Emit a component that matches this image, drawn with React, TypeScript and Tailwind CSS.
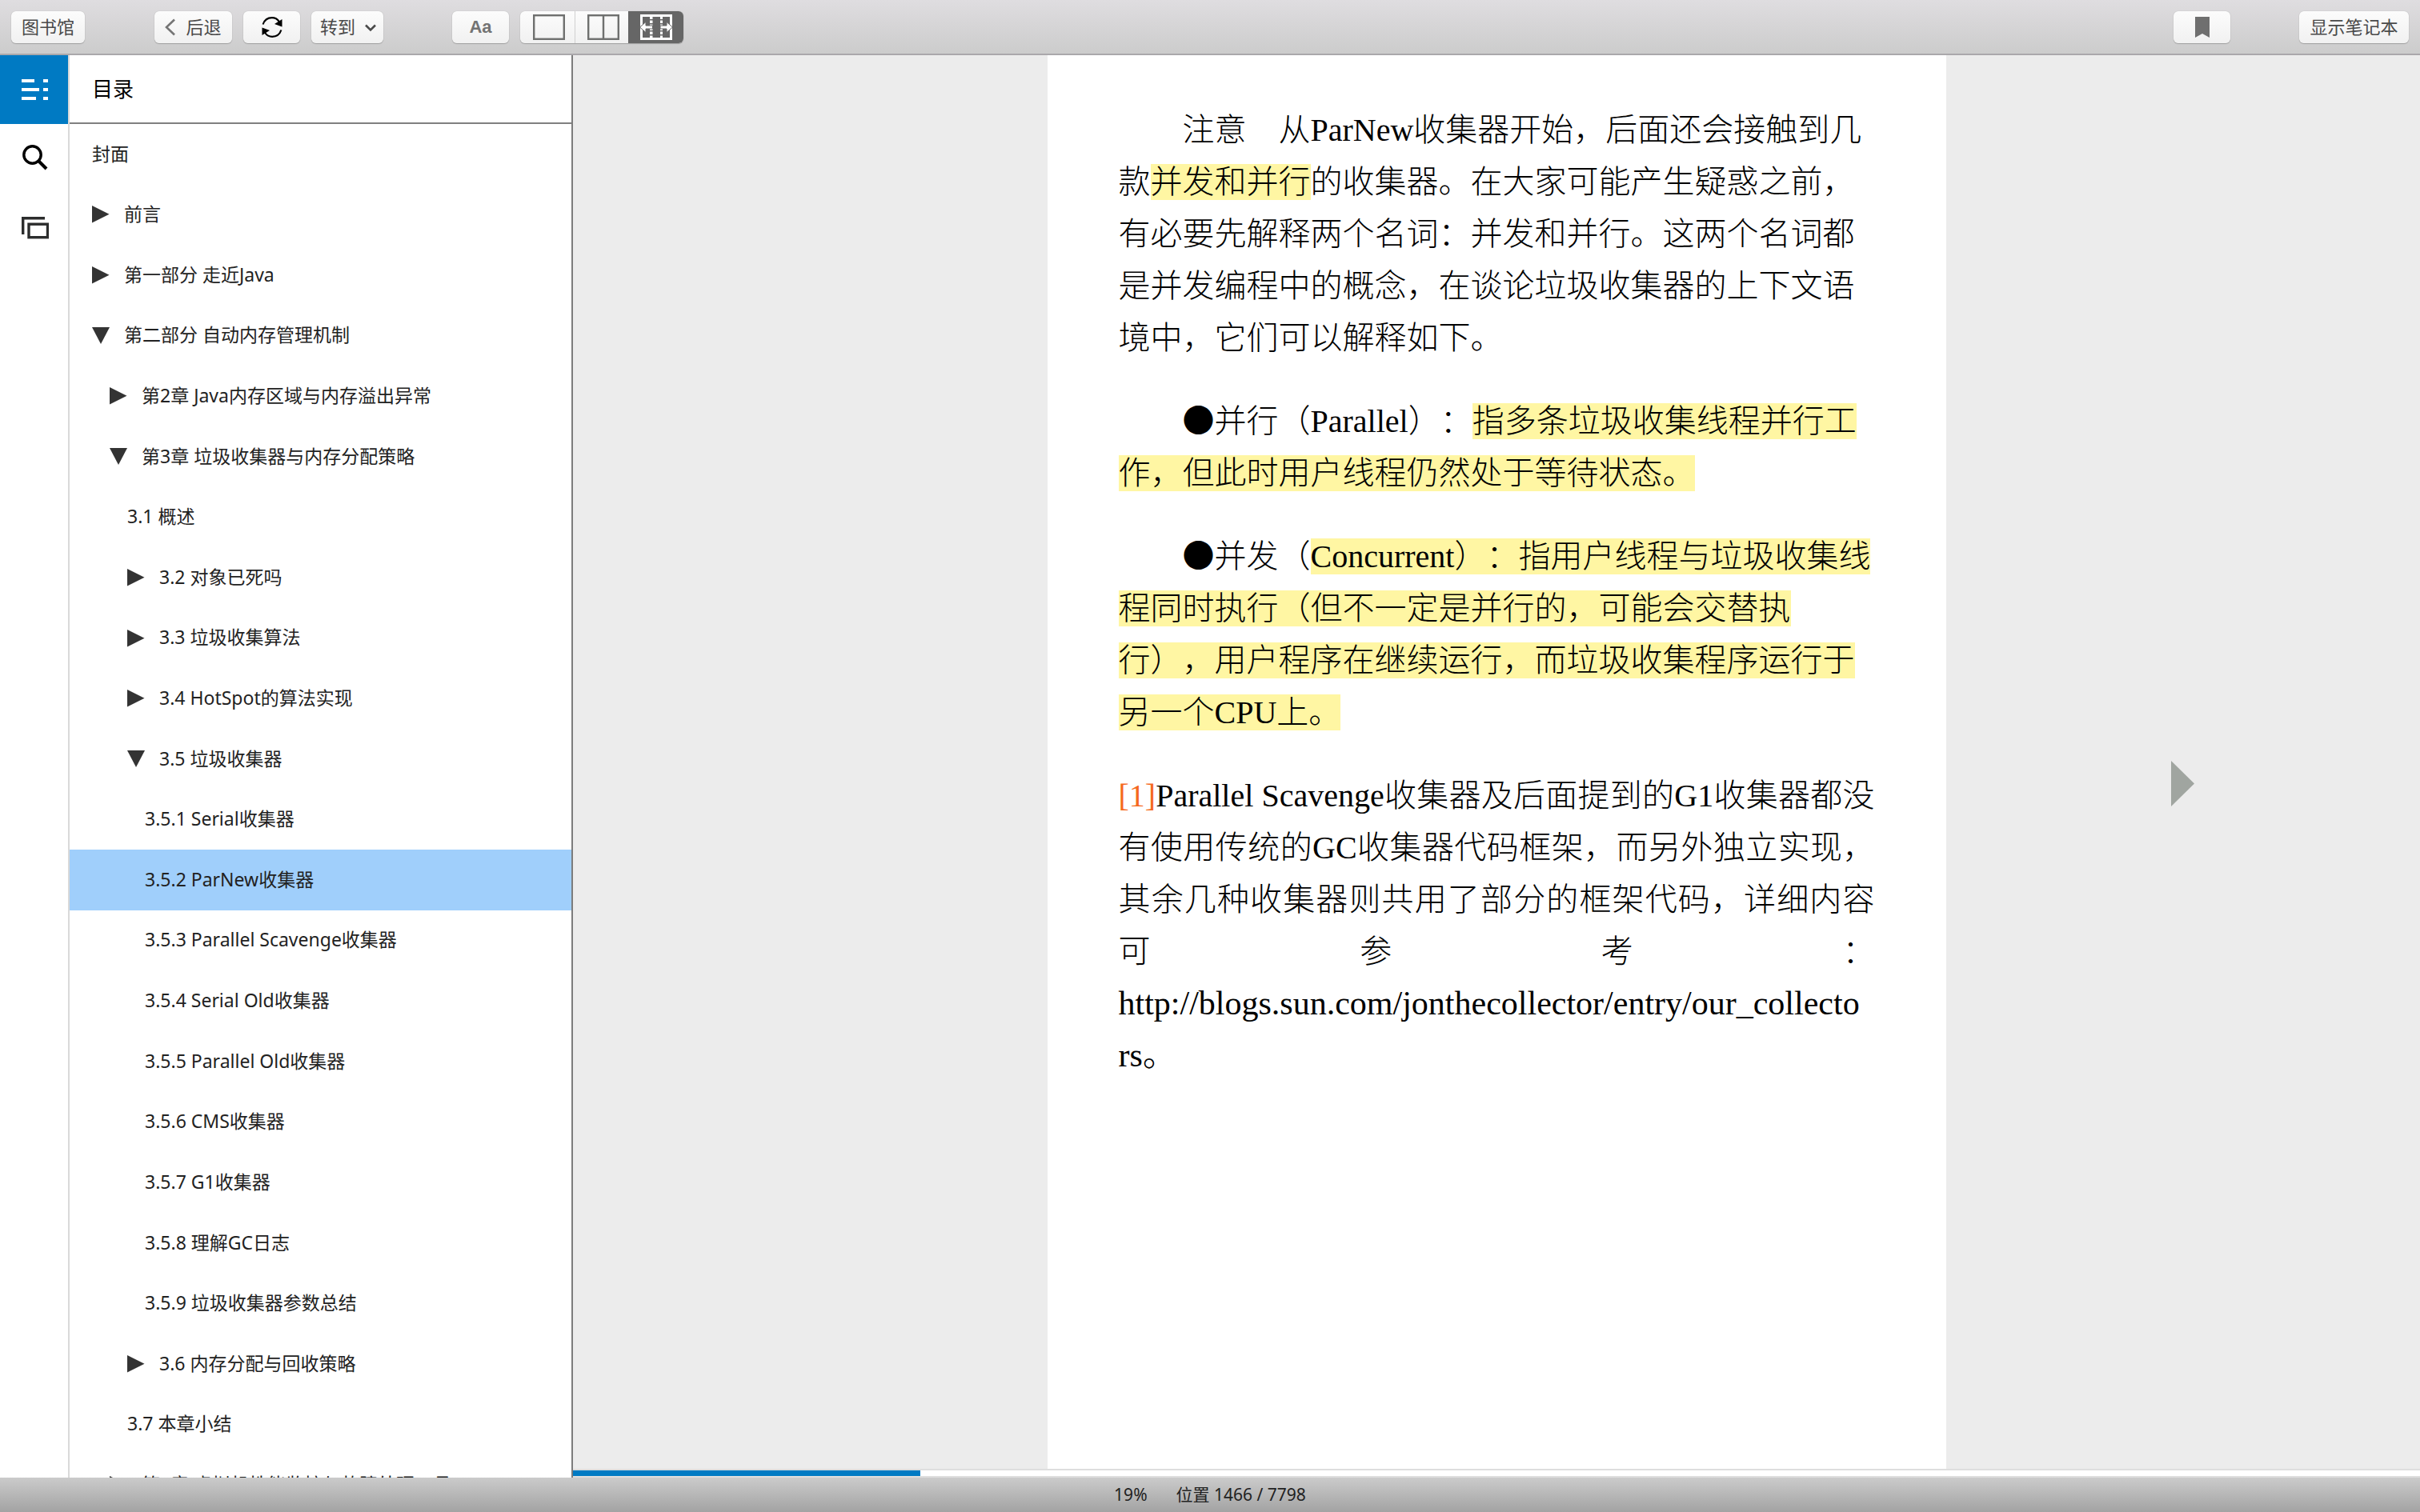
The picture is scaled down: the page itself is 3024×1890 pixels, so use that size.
import React, { useState } from "react";
import clsx from "clsx";

type TocEntry = {
  title: string;
  level: number;
  state?: "open" | "closed";
};

const toc: TocEntry[] = [
  { title: "封面", level: 0 },
  { title: "前言", level: 0, state: "closed" },
  { title: "第一部分 走近Java", level: 0, state: "closed" },
  { title: "第二部分 自动内存管理机制", level: 0, state: "open" },
  { title: "第2章 Java内存区域与内存溢出异常", level: 1, state: "closed" },
  { title: "第3章 垃圾收集器与内存分配策略", level: 1, state: "open" },
  { title: "3.1 概述", level: 2 },
  { title: "3.2 对象已死吗", level: 2, state: "closed" },
  { title: "3.3 垃圾收集算法", level: 2, state: "closed" },
  { title: "3.4 HotSpot的算法实现", level: 2, state: "closed" },
  { title: "3.5 垃圾收集器", level: 2, state: "open" },
  { title: "3.5.1 Serial收集器", level: 3 },
  { title: "3.5.2 ParNew收集器", level: 3 },
  { title: "3.5.3 Parallel Scavenge收集器", level: 3 },
  { title: "3.5.4 Serial Old收集器", level: 3 },
  { title: "3.5.5 Parallel Old收集器", level: 3 },
  { title: "3.5.6 CMS收集器", level: 3 },
  { title: "3.5.7 G1收集器", level: 3 },
  { title: "3.5.8 理解GC日志", level: 3 },
  { title: "3.5.9 垃圾收集器参数总结", level: 3 },
  { title: "3.6 内存分配与回收策略", level: 2, state: "closed" },
  { title: "3.7 本章小结", level: 2 },
  { title: "第4章 虚拟机性能监控与故障处理工具", level: 1, state: "closed" },
];

const indents = ["pl-7", "pl-[50px]", "pl-[72px]", "pl-[94px]"];

const toolButton =
  "h-10 rounded-md bg-linear-to-b from-[#fcfcfc] to-[#f1f1f1] shadow-[0_1px_1px_#a0a0a0,0_0_1px_#a0a0a0] flex items-center justify-center text-[22px] text-[#4a4a4a]";

const Toolbar = () => (
  <header className="h-[69px] shrink-0 flex items-center px-3.5 bg-linear-to-b from-[#dfdde0] to-[#cccccc] border-b-2 border-[#aaa8ab]">
    <button className={clsx(toolButton, "w-[92px]")}>图书馆</button>

    {/* NAVIGATION */}
    <div className="flex gap-3.5 ml-[87px]">
      <button className={clsx(toolButton, "w-[97px] gap-3")}>
        <svg width="14" height="22" viewBox="0 0 14 22" fill="none">
          <path d="M12 1.5 2 11l10 9.5" stroke="#757575" strokeWidth="2.6" />
        </svg>
        后退
      </button>
      <button className={clsx(toolButton, "w-[71px]")} aria-label="刷新">
        <svg width="28" height="28" viewBox="0 0 28 28" fill="none">
          <path d="M2.6 10.5C4.5 5 9 2.2 13.8 2.2c3.8 0 7 1.8 9 4.8" stroke="#000" strokeWidth="2.2" />
          <path d="M26.5 4v9.500l-9.5-3.500z" fill="#000" />
          <path d="M25.4 17.5C23.5 23 19 25.8 14.2 25.8c-3.8 0-7-1.8-9-4.8" stroke="#000" strokeWidth="2.2" />
          <path d="M1.5 24v-9.500l9.5 3.500z" fill="#000" />
        </svg>
      </button>
      <div className="relative">
        <select
          aria-label="转到"
          className="h-10 w-[90px] pl-[11px] appearance-none rounded-md bg-linear-to-b from-[#fcfcfc] to-[#f1f1f1] shadow-[0_1px_1px_#a0a0a0,0_0_1px_#a0a0a0] text-[22px] text-[#4a4a4a]"
        >
          <option>转到</option>
        </select>
        <svg
          className="absolute right-2 top-4 pointer-events-none"
          width="16"
          height="10"
          viewBox="0 0 16 10"
          fill="none"
        >
          <path d="m2 1.5 6 6 6-6" stroke="#4a4a4a" strokeWidth="2.6" />
        </svg>
      </div>
    </div>

    {/* VIEW OPTIONS */}
    <div className="flex gap-3.5 ml-[86px]">
      <button
        className={clsx(toolButton, "w-[71px] font-bold font-['Liberation_Sans',sans-serif]")}
      >
        <span className="text-[#737373]">Aa</span>
      </button>
      <div className="flex rounded-md overflow-hidden h-10 bg-linear-to-b from-[#fcfcfc] to-[#f1f1f1] shadow-[0_1px_1px_#a0a0a0,0_0_1px_#a0a0a0]">
        <button className="w-[69px] flex items-center justify-center pl-1 border-r border-[#d0d0d0]" aria-label="单栏">
          <svg width="40" height="32" viewBox="0 0 40 32" fill="none">
            <rect x="1.2" y="1.2" width="37.6" height="29.6" stroke="#6f706f" strokeWidth="2.4" />
          </svg>
        </button>
        <button className="w-[66px] flex items-center justify-center pl-1" aria-label="双栏">
          <svg width="40" height="32" viewBox="0 0 40 32" fill="none">
            <rect x="1.2" y="1.2" width="37.6" height="29.6" stroke="#6f706f" strokeWidth="2.4" />
            <path d="M20 1v30" stroke="#6f706f" strokeWidth="2.4" />
          </svg>
        </button>
        <button className="w-[69px] flex items-center justify-center bg-[#666666]" aria-label="自动">
          <svg width="40" height="32" viewBox="0 0 40 32">
            <path fill="#fff" d="M0 0h40v32H0z" />
            <path fill="#666" d="M3 3h9v26H3zM15.500 3h9.500v26h-9.500zM28 3h9v26h-9z" />
            <path
              fill="#666"
              d="M12 6h4v1.500h-4zM12 11h4v1.500h-4zM12 20h4v1.500h-4zM12 25h4v1.500h-4zM25 6h3v1.500h-3zM25 11h3v1.500h-3zM25 20h3v1.500h-3zM25 25h3v1.500h-3z"
            />
            <path
              fill="#fff"
              stroke="#666"
              strokeWidth="1"
              d="M-.5 16 7 9.500V14h8.500v4H7v4.500zM40.500 16 33 9.500V14h-8v4h8v4.500z"
            />
          </svg>
        </button>
      </div>
    </div>

    {/* BOOKMARK + NOTEBOOK */}
    <div className="flex gap-[86px] ml-auto">
      <button className={clsx(toolButton, "w-[71px]")} aria-label="书签">
        <svg width="18" height="26" viewBox="0 0 18 26">
          <path d="M0 0h18v26l-9-5-9 5z" fill="#6f6f6f" />
        </svg>
      </button>
      <button className={clsx(toolButton, "w-[137px]")}>显示笔记本</button>
    </div>
  </header>
);

const Rail = () => (
  <nav className="w-[87px] shrink-0 border-r-2 border-[#d9d9d9] flex flex-col">
    <button className="h-[86px] pl-0.5 bg-[#007ac3] flex items-center justify-center" aria-label="目录">
      <svg width="34" height="26" viewBox="0 0 34 26" fill="#fff">
        <path d="M0 0h16v4H0zM0 11h22v4H0zM0 22h18v4H0zM27 0h6v4h-6zM27 11h6v4h-6zM27 22h6v4h-6z" />
      </svg>
    </button>
    <button className="h-[84px] pl-0.5 flex items-center justify-center" aria-label="搜索">
      <svg width="32" height="32" viewBox="0 0 32 32" fill="none" stroke="#000">
        <circle cx="12.500" cy="12.500" r="10.700" strokeWidth="3.400" />
        <path d="M20 20l10 10" strokeWidth="4" />
      </svg>
    </button>
    <button className="h-[92px] pl-0.5 flex items-center justify-center" aria-label="卡片">
      <svg width="34" height="28" viewBox="0 0 34 28" fill="none" stroke="#2c2d2d" strokeWidth="3.400">
        <path d="M29 1.700H1.700V22" />
        <rect x="9" y="9.200" width="23.500" height="16.500" />
      </svg>
    </button>
  </nav>
);

type TocProps = {
  selected: string;
  setSelected: (value: string) => void;
};

const TableOfContents = ({ selected, setSelected }: TocProps) => (
  <aside className="w-[629px] shrink-0 border-r-2 border-[#7c7c7c] flex flex-col">
    <h2 className="h-[86px] shrink-0 flex items-center pl-7 text-[26px] text-black border-b-2 border-[#808080]">
      目录
    </h2>
    <div className="flex-1 min-h-0 overflow-hidden">
      <ul className="grid auto-rows-fr h-[1739px]">
        {toc.map((item) => (
          <li key={item.title} className={clsx("flex", selected === item.title && "bg-[#a0cffb]")}>
            <button
              className={clsx("w-full flex items-center text-left whitespace-nowrap", indents[item.level])}
              onClick={() => setSelected(item.title)}
            >
              {item.state && (
                <svg className="mr-[18px]" width="22" height="22" viewBox="0 0 22 22" fill="#333">
                  <path d={item.state === "open" ? "M0 0h22L11 21z" : "M0 0v21.500l21.500-10.700z"} />
                </svg>
              )}
              <span className="pb-0.5">{item.title}</span>
            </button>
          </li>
        ))}
      </ul>
    </div>
  </aside>
);

const Mark = ({ children }: { children: React.ReactNode }) => (
  <mark className="bg-[#fff6a3] text-black">{children}</mark>
);

const Bullet = () => <span className="font-['Noto_Sans_CJK_SC',sans-serif] leading-none">●</span>;

const BookPage = () => (
  <article className="w-[1123px] bg-white px-[89px] pt-[61px] flex flex-col gap-[39px] font-['Liberation_Serif','Noto_Sans_CJK_SC',serif] font-light text-[40px] leading-[65px] text-black whitespace-nowrap [text-spacing-trim:space-all]">
    <p className="indent-20">
      注意　从ParNew收集器开始，后面还会接触到几
      <br />
      款<Mark>并发和并行</Mark>的收集器。在大家可能产生疑惑之前，
      <br />
      有必要先解释两个名词：并发和并行。这两个名词都
      <br />
      是并发编程中的概念，在谈论垃圾收集器的上下文语
      <br />
      境中，它们可以解释如下。
    </p>
    <p className="indent-20">
      <Bullet />
      并行（Parallel）：<Mark>指多条垃圾收集线程并行工</Mark>
      <br />
      <Mark>作，但此时用户线程仍然处于等待状态。</Mark>
    </p>
    <p className="indent-20">
      <Bullet />
      并发（<Mark>Concurrent）：指用户线程与垃圾收集线</Mark>
      <br />
      <Mark>程同时执行（但不一定是并行的，可能会交替执</Mark>
      <br />
      <Mark>行），用户程序在继续运行，而垃圾收集程序运行于</Mark>
      <br />
      <Mark>另一个CPU上。</Mark>
    </p>
    {/* FOOTNOTE */}
    <div>
      <p className="text-justify [text-align-last:justify]">
        <a href="#note-1" className="text-[#f5691e]">[1]</a>
        Parallel Scavenge收集器及后面提到的G1收集器都没
        <br />
        有使用传统的GC收集器代码框架，而另外独立实现，
        <br />
        其余几种收集器则共用了部分的框架代码，详细内容
        <br />
        可参考：
      </p>
      <p className="text-[42px] leading-[65px]">
        http://blogs.sun.com/jonthecollector/entry/our_collecto
        <br />
        rs。
      </p>
    </div>
  </article>
);

const App = () => {
  const [selected, setSelected] = useState("3.5.2 ParNew收集器");
  const percent = (1466 / 7798) * 100;

  return (
    <div className="h-screen flex flex-col overflow-hidden bg-white font-['Noto_Sans','Noto_Sans_CJK_SC',sans-serif] text-[23px] text-[#222222]">
      <Toolbar />
      <div className="flex flex-1 min-h-0">
        <Rail />
        <TableOfContents selected={selected} setSelected={setSelected} />
        <main className="flex-1 min-w-0 flex flex-col">
          <div className="flex-1 min-h-0 grid grid-cols-[1fr_auto_1fr] bg-[#ececec]">
            <div />
            <BookPage />
            <button className="flex items-center justify-center pt-[53px]" aria-label="下一页">
              <svg width="29" height="57" viewBox="0 0 29 57">
                <path d="M0 0v57l29-28.500z" fill="#a0a5a0" />
              </svg>
            </button>
          </div>
          {/* PROGRESS */}
          <div className="h-[11px] border-y-2 border-[#dedede] bg-white">
            <div className="h-full bg-[#007ac3]" style={{ width: `${percent}%` }} />
          </div>
        </main>
      </div>
      <footer className="h-[43px] shrink-0 flex items-center justify-center gap-9 bg-linear-to-b from-[#cbcbcb] to-[#a3a3a3] text-[21px]">
        <span>19%</span>
        <span>位置 1466 / 7798</span>
      </footer>
    </div>
  );
};

export default App;
